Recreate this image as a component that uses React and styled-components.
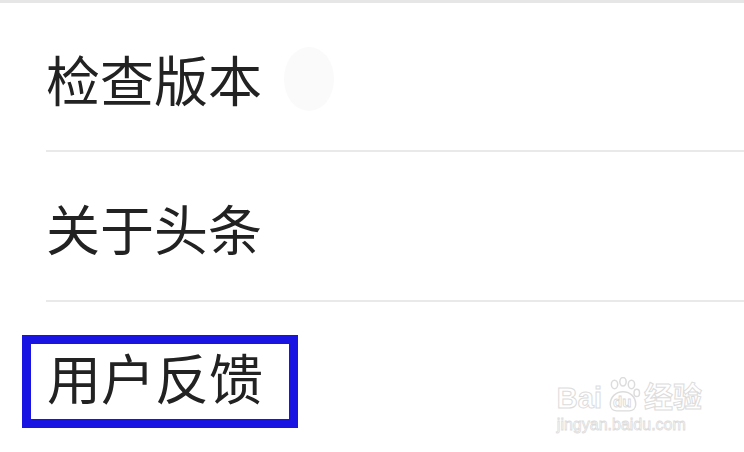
import styled, { createGlobalStyle } from "styled-components";

const GlobalStyle = createGlobalStyle`
  html, body {
    margin: 0;
    padding: 0;
    background: #ffffff;
  }
  body {
    font-family: "Noto Sans CJK SC", "Noto Sans", sans-serif;
  }
`;

const items = [
  { id: "version", label: "检查版本", dot: true },
  { id: "about", label: "关于头条" },
  { id: "feedback", label: "用户反馈", highlight: true },
];

function PawIcon() {
  return (
    <svg width="36" height="36" viewBox="0 0 34 34" fill="none" stroke="#dcdcdc" strokeWidth="1.4">
      <ellipse cx="9" cy="7" rx="3" ry="4" />
      <ellipse cx="17" cy="4.5" rx="3" ry="4" />
      <ellipse cx="25" cy="7" rx="3" ry="4" />
      <ellipse cx="30" cy="15" rx="2.6" ry="3.4" />
      <path d="M5 26c0-7 5-12 12-12s12 5 12 12c0 4-3 6-6 6H11c-3 0-6-2-6-6z" />
    </svg>
  );
}

function App() {
  return (
    <>
      <GlobalStyle />
      <Page>
        <List>
          {items.map((item) => (
            <Row key={item.id}>
              {item.highlight ? (
                <Highlight>
                  <Label $shift={-9}>{item.label}</Label>
                </Highlight>
              ) : (
                <Label>{item.label}</Label>
              )}
              {item.dot && <GhostDot />}
            </Row>
          ))}
        </List>

        <Watermark>
          <Brand>
            <BrandText>Bai</BrandText>
            <PawWrap>
              <PawIcon />
              <PawLabel>du</PawLabel>
            </PawWrap>
            <BrandText>经验</BrandText>
          </Brand>
          <Domain>jingyan.baidu.com</Domain>
        </Watermark>
      </Page>
    </>
  );
}

export default App;

/* ------- Styled Components ------- */

const Page = styled.div`
  position: relative;
  width: 744px;
  height: 452px;
  overflow: hidden;
  background: #ffffff;
  border-top: 3px solid #e6e6e6;
  box-sizing: border-box;
`;

const List = styled.div`
  display: flex;
  flex-direction: column;
`;

const Row = styled.div`
  display: flex;
  align-items: center;
  box-sizing: border-box;
  height: 150px;
  margin-left: 46px;
  border-bottom: 2px solid #e9e9e9;

  &:first-child {
    height: 149px;
  }

  &:last-child {
    border-bottom: none;
  }
`;

const Label = styled.span`
  font-size: 54px;
  line-height: 1;
  color: #222222;
  margin-top: ${({ $shift }) => ($shift ?? 4)}px;
`;

const Highlight = styled.div`
  display: flex;
  align-items: center;
  box-sizing: border-box;
  width: 276px;
  height: 93px;
  margin-left: -24px;
  margin-top: 9px;
  padding-left: 16px;
  border: 9px solid #1a14e2;
`;

const GhostDot = styled.div`
  width: 50px;
  height: 64px;
  margin-left: 22px;
  margin-top: 4px;
  border-radius: 50%;
  background: #fafafa;
`;

const Watermark = styled.div`
  position: absolute;
  right: 42px;
  bottom: 18px;
  display: flex;
  flex-direction: column;
  align-items: flex-start;
`;

const Brand = styled.div`
  display: flex;
  align-items: flex-end;
`;

const BrandText = styled.span`
  font-family: "Liberation Sans", "Noto Sans CJK SC", sans-serif;
  font-size: 29px;
  font-weight: bold;
  color: #ffffff;
  -webkit-text-stroke: 1px #dcdcdc;
  line-height: 1;
`;

const PawWrap = styled.span`
  position: relative;
  display: inline-flex;
  margin: 0 3px;
`;

const PawLabel = styled.span`
  position: absolute;
  left: 8px;
  bottom: 3px;
  font-family: "Liberation Sans", sans-serif;
  font-size: 15px;
  font-weight: bold;
  color: #ffffff;
  -webkit-text-stroke: 0.8px #d8d8d8;
`;

const Domain = styled.span`
  font-family: "Liberation Sans", sans-serif;
  font-size: 16px;
  color: #ffffff;
  -webkit-text-stroke: 0.8px #dcdcdc;
  margin-top: 3px;
`;
